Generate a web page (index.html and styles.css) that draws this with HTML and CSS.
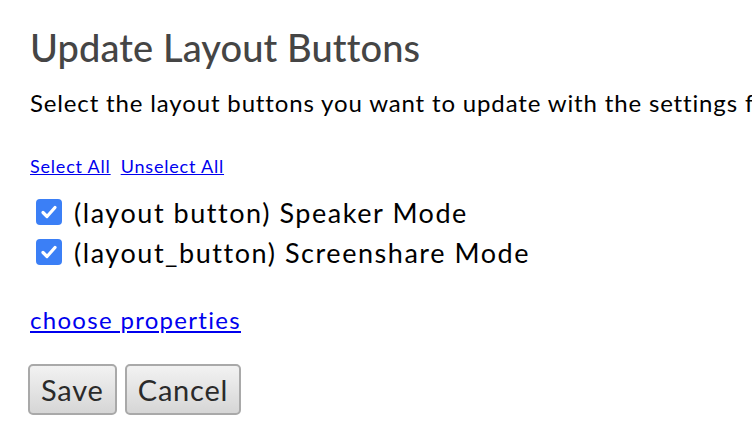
FILE: index.html
```html
<!DOCTYPE html>
<html>
<head>
<meta charset="utf-8">
<link rel="stylesheet" href="styles.css">
</head>
<body>
<div class="page">
  <h1 class="title">Update Layout Buttons</h1>
  <p class="intro">Select the layout buttons you want to update with the settings from</p>
  <div class="select-links">
    <a href="#" class="link-small">Select All</a>
    <a href="#" class="link-small">Unselect All</a>
  </div>
  <ul class="items">
    <li class="item">
      <span class="check"><svg viewBox="0 0 26 26" width="26" height="26"><path d="M7 13.5l4 4 8-9" fill="none" stroke="#fff" stroke-width="3.2" stroke-linecap="round" stroke-linejoin="round"/></svg></span>
      <span class="label">(layout button) Speaker Mode</span>
    </li>
    <li class="item">
      <span class="check"><svg viewBox="0 0 26 26" width="26" height="26"><path d="M7 13.5l4 4 8-9" fill="none" stroke="#fff" stroke-width="3.2" stroke-linecap="round" stroke-linejoin="round"/></svg></span>
      <span class="label">(layout_button) Screenshare Mode</span>
    </li>
  </ul>
  <a href="#" class="props">choose properties</a>
  <div class="actions">
    <button class="btn">Save</button>
    <button class="btn">Cancel</button>
  </div>
</div>
</body>
</html>
```

FILE: styles.css
```css
html, body {
  margin: 0;
  padding: 0;
  background: #fff;
  overflow: hidden;
}
body {
  font-family: "Lato", "Noto Sans", sans-serif;
  color: #000;
}
.page {
  padding: 20px 0 0 30px;
  white-space: nowrap;
}
.title {
  margin: 0;
  font-size: 38px;
  line-height: 54px;
  font-weight: 500;
  color: #454545;
  letter-spacing: 0.1px;
}
.intro {
  margin: 14px 0 0;
  font-size: 24px;
  line-height: 30px;
  letter-spacing: 0.85px;
  overflow: hidden;
}
.select-links {
  margin-top: 37px;
  display: flex;
  gap: 10px;
  font-size: 18px;
  line-height: 22px;
  letter-spacing: 0.8px;
}
a {
  color: #0000ee;
}
.items {
  list-style: none;
  margin: 15px 0 0;
  padding: 0 0 0 6px;
}
.item {
  display: flex;
  align-items: center;
  gap: 12px;
  height: 40px;
  font-size: 27px;
  letter-spacing: 1.55px;
}
.check {
  width: 26px;
  height: 26px;
  border-radius: 4px;
  background: #3b7ff6;
  display: flex;
}
.props {
  display: block;
  margin-top: 33px;
  font-size: 24px;
  line-height: 30px;
  letter-spacing: 1.3px;
}
.actions {
  margin-top: 29px;
  margin-left: -2px;
  display: flex;
  gap: 8px;
}
.btn {
  font-family: "Lato", "Noto Sans", sans-serif;
  font-size: 29px;
  letter-spacing: 0.8px;
  color: #2a2a2a;
  height: 51px;
  padding: 0 11px;
  border: 2px solid #a9a9a9;
  border-radius: 5px;
  background: linear-gradient(#f2f2f2, #d6d6d6);
}
```
